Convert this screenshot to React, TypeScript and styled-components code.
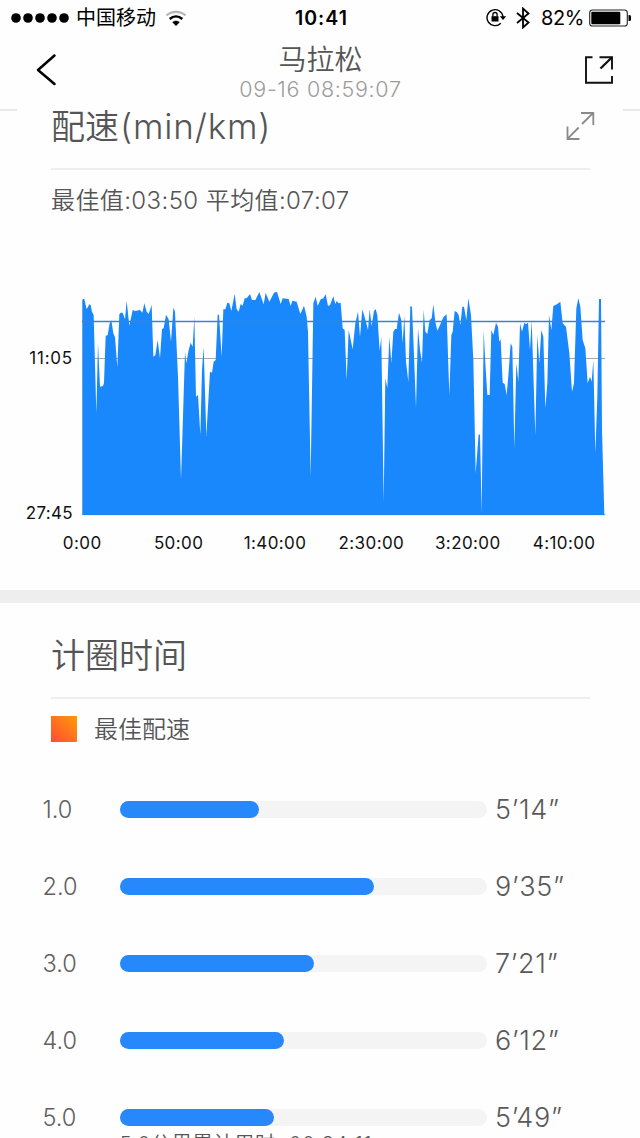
import React from 'react';
import styled, { createGlobalStyle } from 'styled-components';

const GlobalStyle = createGlobalStyle`
  * { box-sizing: border-box; }
  body {
    margin: 0;
    background: #fff;
    font-family: Inter, "Noto Sans CJK SC", sans-serif;
    overflow: hidden;
  }
`;

const Screen = styled.main`
  width: 640px;
  height: 1138px;
  overflow: hidden;
  background: #fefefe;
  display: flex;
  flex-direction: column;
  > * { flex-shrink: 0; }
`;

const StatusBar = styled.div`
  height: 36px;
  display: grid;
  grid-template-columns: 1fr auto 1fr;
  align-items: center;
  padding: 0 8px 0 11px;
  color: #000;
`;

const StatusGroup = styled.div<{ $end?: boolean }>`
  display: flex;
  align-items: center;
  justify-content: ${(p) => (p.$end ? 'flex-end' : 'flex-start')};
`;

const Carrier = styled.span`
  font-size: 20px;
  line-height: 36px;
  height: 36px;
  margin: 0 9px 0 7px;
`;

const Clock = styled.span`
  font-size: 19.5px;
  font-weight: 600;
  letter-spacing: 1px;
  line-height: 36px;
  height: 36px;
`;

const Percent = styled.span`
  font-size: 20px;
  letter-spacing: -0.4px;
  line-height: 36px;
  margin: 0 5px 0 12px;
`;

const NavBar = styled.header`
  height: 73px;
  display: flex;
  justify-content: space-between;
  align-items: flex-start;
  padding: 0 26px 0 35px;
`;

const NavIcon = styled.svg<{ $top: number }>`
  margin-top: ${(p) => p.$top}px;
  display: block;
`;

const NavTitles = styled.div`
  display: flex;
  flex-direction: column;
  align-items: center;
`;

const NavTitle = styled.h1`
  margin: 0;
  font-size: 28px;
  font-weight: 350;
  line-height: 49px;
  height: 41px;
  color: #555;
`;

const NavDate = styled.span`
  font-size: 21.5px;
  font-weight: 300;
  line-height: 24px;
  letter-spacing: 0.7px;
  color: #9c9c9c;
`;

const NavEdges = styled.div`
  height: 3px;
  display: flex;
  justify-content: space-between;
  &::before, &::after {
    content: "";
    width: 17px;
    height: 2px;
    background: #e9e9e9;
  }
`;

const TitleRow = styled.div<{ $height: number; $line: number }>`
  height: ${(p) => p.$height}px;
  margin: 0 50px 0 51px;
  border-bottom: 2px solid #eeeeee;
  display: flex;
  justify-content: space-between;
  align-items: flex-start;
  line-height: ${(p) => p.$line}px;
`;

const SectionTitle = styled.h2`
  margin: 0;
  font-size: 34px;
  font-weight: 350;
  line-height: inherit;
  color: #555;
  white-space: nowrap;
`;

const Unit = styled.span`
  margin-left: 1px;
  letter-spacing: 0.8px;
  font-size: 35px;
`;

const ExpandIcon = styled.svg`
  display: block;
  margin-right: -5px;
`;

const Stats = styled.p`
  margin: 0 0 0 51px;
  height: 110px;
  font-size: 24px;
  font-weight: 350;
  line-height: 61px;
  letter-spacing: 0.4px;
  color: #555;
  white-space: nowrap;
`;

const ChartRow = styled.div`
  display: flex;
  height: 240px;
`;

const YAxis = styled.div`
  width: 73px;
  margin-right: 9px;
  padding-top: 68px;
  display: flex;
  flex-direction: column;
  gap: 135px;
  text-align: right;
  font-size: 17px;
  line-height: 20px;
  color: #111;
`;

const YLabel = styled.span<{ $spacing?: number }>`
  letter-spacing: ${(p) => p.$spacing ?? 0.3}px;
`;

const XAxis = styled.div`
  display: grid;
  grid-template-columns: repeat(6, 96.4px);
  margin-left: 34px;
  height: 69.5px;
  padding-top: 13px;
  text-align: center;
  font-size: 17px;
  line-height: 20px;
  letter-spacing: 0.4px;
  color: #111;
`;

const Band = styled.div`
  height: 13.5px;
  background: #eeeeee;
`;

const Legend = styled.div`
  display: flex;
  align-items: center;
  height: 61px;
  margin-left: 51px;
  gap: 17px;
  font-size: 24px;
  font-weight: 350;
  line-height: 60px;
  color: #555;
`;

const LegendText = styled.span`
  height: 58px;
`;

const Swatch = styled.span`
  width: 26px;
  height: 26px;
  background: linear-gradient(45deg, #ff4b33, #ff9a08);
`;

const Laps = styled.div`
  padding-top: 12px;
`;

const LapRow = styled.div`
  height: 76.8px;
  display: flex;
  align-items: center;
`;

const LapIndex = styled.span`
  width: 119.5px;
  padding-left: 42.5px;
  font-size: 23.5px;
  font-weight: 350;
  color: #606060;
`;

const Track = styled.div`
  width: 367px;
  height: 17px;
  border-radius: 9px;
  background: #f4f4f4;
`;

const Fill = styled.div`
  height: 17px;
  border-radius: 9px;
  background: #2688fb;
`;

const LapTime = styled.span`
  margin-left: 8.5px;
  font-size: 27px;
  font-weight: 350;
  letter-spacing: 0.7px;
  color: #5a5a5a;
`;

const LapNote = styled.div`
  margin: -26px 0 0 119.5px;
  font-size: 20px;
  font-weight: 350;
  line-height: 30px;
  letter-spacing: 0.85px;
  color: #555;
  white-space: nowrap;
`;

// Pace samples along the run, three chart units to a pixel.
const PACE =
  '38,57 43,57 50,88 58,73 62,75 66,95 71,105 79,400 84,190 90,320 99,318 102,308 107,168 113,165 119,130 124,121 130,160 135,172 142,262 148,103 152,98 158,98 165,118 170,62 178,137 188,90 195,93 210,90 217,98 223,70 230,95 236,102 245,75 250,230 256,226 263,180 270,235 276,147 281,145 288,104 296,118 303,185 310,83 315,95 324,290 333,600 345,215 349,250 356,210 362,188 368,200 373,110 378,350 384,345 391,465 396,270 401,200 409,468 420,275 426,278 431,245 437,240 443,104 447,104 455,230 460,88 466,88 472,68 478,70 484,93 494,42 500,88 506,95 512,72 518,77 524,55 530,55 540,42 ' +
  '546,60 556,60 568,36 581,73 587,38 598,65 612,38 621,35 632,72 638,55 656,57 662,78 667,62 680,65 691,102 702,77 710,110 714,155 722,590 730,70 737,50 743,78 752,58 760,55 767,43 774,78 780,75 790,49 796,72 800,63 806,70 812,68 818,145 824,150 830,300 836,150 848,208 856,130 864,95 870,170 877,88 888,125 894,150 899,88 905,138 912,92 917,88 922,105 929,212 934,170 941,665 946,295 952,325 958,170 964,250 970,155 975,147 980,147 987,98 994,120 998,190 1003,105 ' +
  '1008,245 1015,305 1021,78 1026,80 1031,200 1038,382 1044,145 1050,210 1056,248 1061,90 1066,155 1072,162 1079,120 1085,115 1090,73 1096,125 1102,152 1110,135 1120,112 1130,103 1138,345 1144,165 1148,155 1154,93 1161,97 1166,105 1171,135 1177,80 1182,80 1189,120 1195,55 1203,105 1210,240 1217,580 1226,462 1230,465 1235,700 1241,150 1246,250 1252,345 1259,345 1264,150 1270,165 1278,128 1284,140 1288,185 1292,178 1298,308 1304,312 1310,345 1316,275 1322,190 1327,200 1333,505 1339,250 1345,305 1350,130 1356,155 1363,128 1368,133 1374,128 1380,210 1385,120 1396,465 1402,165 1408,250 1414,150 1420,170 1426,385 1432,310 1437,105 1444,150 1450,78 1462,72 1471,65 1478,130 1488,140 1498,220 1506,335 1512,310 1519,85 1525,55 1531,80 1538,180 1546,205 1553,310 1560,290 1565,305 1570,240 1576,520 1582,350 1587,57 1593,57 1596,450 1603,705';

const TICKS = ['0:00', '50:00', '1:40:00', '2:30:00', '3:20:00', '4:10:00'];

const LAPS = [
  { index: '1.0', time: '5’14”', width: 139 },
  { index: '2.0', time: '9’35”', width: 254.5 },
  { index: '3.0', time: '7’21”', width: 194.5 },
  { index: '4.0', time: '6’12”', width: 164.5 },
  { index: '5.0', time: '5’49”', width: 154.5 },
];

const SignalDots = () => (
  <svg width="58" height="10" viewBox="0 0 58 10">
    {[5, 17, 29, 41, 53].map((cx) => (
      <circle key={cx} cx={cx} cy="5" r="4.8" />
    ))}
  </svg>
);

const Wifi = () => (
  <svg width="22" height="17" viewBox="0 0 22 17" fill="none">
    <path d="M1.5 5.4C7 .6 15 .6 20.5 5.4" stroke="#b5b5b5" strokeWidth="2.2" />
    <path d="M4.7 9C8.5 5.7 13.5 5.7 17.3 9" stroke="#000" strokeWidth="2.4" />
    <path d="M7.3 12.3C9.5 10.3 12.5 10.3 14.7 12.3L11 16Z" fill="#000" />
  </svg>
);

const LockIcon = styled.svg`
  margin-top: -2px;
`;

const RotationLock = () => (
  <LockIcon width="21" height="19" viewBox="0 0 21 19" fill="none">
    <path d="M14.8 15.2A8 8 0 1 1 17 9" stroke="#000" strokeWidth="1.4" />
    <path d="M13.8 8.3h6.4L17 12Z" fill="#000" />
    <path d="M5.5 8.2h7v5.3h-7Z" fill="#000" />
    <path d="M6.9 8.5V6.6a2.1 2.1 0 0 1 4.2 0v1.9" stroke="#000" strokeWidth="1.3" />
  </LockIcon>
);

const BluetoothIcon = styled.svg`
  margin-left: 9px;
  margin-right: -1px;
`;

const Bluetooth = () => (
  <BluetoothIcon width="14" height="22" viewBox="0 0 14 22" fill="none">
    <path d="M1 6l11.5 9.5L7 20.5V1.5l5.5 5L1 16" stroke="#000" strokeWidth="1.8" />
  </BluetoothIcon>
);

const Battery = () => (
  <svg width="43" height="18" viewBox="0 0 43 18" fill="none">
    <rect x=".7" y="1" width="37.6" height="16" rx="2.8" stroke="#222" strokeWidth="1.1" />
    <rect x="2.3" y="2.7" width="29" height="12.6" rx="1" fill="#000" />
    <path d="M39.5 6h1a1.5 1.5 0 0 1 1.5 1.5v3a1.5 1.5 0 0 1-1.5 1.5h-1Z" fill="#000" />
  </svg>
);

export default function App() {
  return (
    <>
      <GlobalStyle />
      <Screen>
        <StatusBar>
          <StatusGroup>
            <SignalDots />
            <Carrier>中国移动</Carrier>
            <Wifi />
          </StatusGroup>
          <Clock>10:41</Clock>
          <StatusGroup $end>
            <RotationLock />
            <Bluetooth />
            <Percent>82%</Percent>
            <Battery />
          </StatusGroup>
        </StatusBar>

        <NavBar>
          <NavIcon $top={17} width="22" height="34" viewBox="0 0 22 34" fill="none">
            <path d="M19.5 2.5L3 17l16.5 14" stroke="#000" strokeWidth="2.5" strokeLinecap="round" strokeLinejoin="round" />
          </NavIcon>
          <NavTitles>
            <NavTitle>马拉松</NavTitle>
            <NavDate>09-16 08:59:07</NavDate>
          </NavTitles>
          <NavIcon $top={20} width="30" height="28" viewBox="0 0 30 28" fill="none" stroke="#111">
            <path d="M8.5 1.3H2v25.4h26V20" strokeWidth="1.9" />
            <path d="M15.5 1.3H28V13.5" strokeWidth="1.9" />
            <path d="M28 1.3L16.5 12.5" strokeWidth="2.3" />
          </NavIcon>
        </NavBar>
        <NavEdges />

        <TitleRow $height={58} $line={29}>
          <SectionTitle>
            配速<Unit>(min/km)</Unit>
          </SectionTitle>
          <ExpandIcon width="30" height="29" viewBox="0 0 30 29" fill="none" stroke="#8a8a8a" strokeWidth="1.8">
            <path d="M16 1H28.300V13M28 1.2L17 12" />
            <path d="M2.5 14.5V27H14.5M2.7 26.7L13.7 15.5" />
          </ExpandIcon>
        </TitleRow>
        <Stats>最佳值:03:50 平均值:07:07</Stats>

        <ChartRow>
          <YAxis>
            <YLabel $spacing={0.8}>11:05</YLabel>
            <YLabel>27:45</YLabel>
          </YAxis>
          <svg width="524" height="240" viewBox="36 0 1572 720">
            <path d="M38 235.5H1605" stroke="#a8a8a8" strokeWidth="3" />
            <polygon points={`38,705 ${PACE}`} fill="#1a88fd" />
            <path d="M36 124.5H1605" stroke="#3a82d6" strokeWidth="4" />
            <path d="M37 704H1606M38 60V704" stroke="#2b7bd0" strokeWidth="2" />
          </svg>
        </ChartRow>
        <XAxis>
          {TICKS.map((t) => (
            <span key={t}>{t}</span>
          ))}
        </XAxis>

        <Band />

        <TitleRow $height={95.5} $line={106}>
          <SectionTitle>计圈时间</SectionTitle>
        </TitleRow>
        <Legend>
          <Swatch />
          <LegendText>最佳配速</LegendText>
        </Legend>
        <Laps>
          {LAPS.map((lap) => (
            <LapRow key={lap.index}>
              <LapIndex>{lap.index}</LapIndex>
              <Track>
                <Fill style={{ width: lap.width }} />
              </Track>
              <LapTime>{lap.time}</LapTime>
            </LapRow>
          ))}
          <LapNote>5.0公里累计用时: 00:34:11</LapNote>
        </Laps>
      </Screen>
    </>
  );
}
